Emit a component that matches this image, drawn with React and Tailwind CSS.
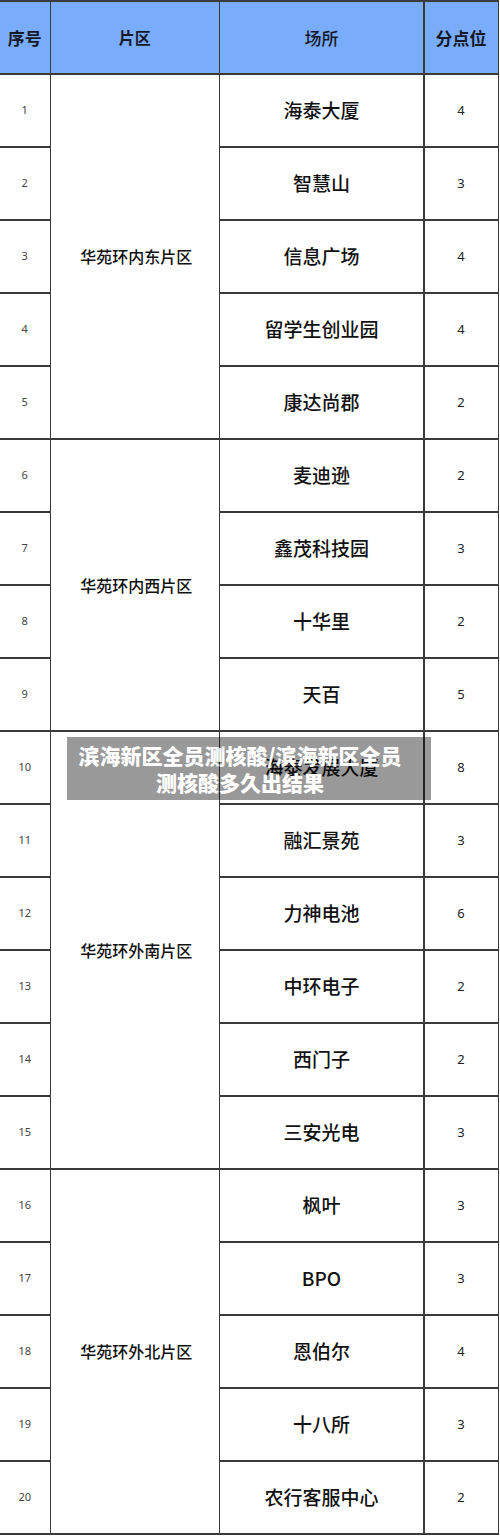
const groups = [
  {
    name: '华苑环内东片区',
    rows: [
      ['海泰大厦', 4],
      ['智慧山', 3],
      ['信息广场', 4],
      ['留学生创业园', 4],
      ['康达尚郡', 2],
    ],
  },
  {
    name: '华苑环内西片区',
    rows: [
      ['麦迪逊', 2],
      ['鑫茂科技园', 3],
      ['十华里', 2],
      ['天百', 5],
    ],
  },
  {
    name: '华苑环外南片区',
    rows: [
      ['海泰发展大厦', 8],
      ['融汇景苑', 3],
      ['力神电池', 6],
      ['中环电子', 2],
      ['西门子', 2],
      ['三安光电', 3],
    ],
  },
  {
    name: '华苑环外北片区',
    rows: [
      ['枫叶', 3],
      ['BPO', 3],
      ['恩伯尔', 4],
      ['十八所', 3],
      ['农行客服中心', 2],
    ],
  },
];

const spanClass = {
  4: 'row-span-4',
  5: 'row-span-5',
  6: 'row-span-6',
};

const cjk = "font-['Noto_Sans_CJK_SC','Noto_Sans',sans-serif]";

export default function App() {
  let n = 0;
  const cells = [];

  groups.forEach((g, gi) => {
    g.rows.forEach(([place, count], ri) => {
      n += 1;
      cells.push(
        <div key={'n' + n} className="bg-white flex items-center justify-center text-[11px] text-[#444] font-['Noto_Sans',sans-serif]">
          {n}
        </div>
      );
      if (ri === 0) {
        cells.push(
          <div
            key={'g' + gi}
            className={`${spanClass[g.rows.length]} bg-white flex items-center justify-center pl-[3px] text-[16px] font-medium text-[#111] ${cjk}`}
          >
            {g.name}
          </div>
        );
      }
      cells.push(
        <div key={'p' + n} className={`bg-white flex items-center justify-center text-[19px] font-medium text-[#111] ${cjk}`}>
          {place}
        </div>
      );
      cells.push(
        <div key={'c' + n} className="bg-white flex items-center justify-center text-[13px] text-[#222] font-['Noto_Sans',sans-serif]">
          {count}
        </div>
      );
    });
  });

  return (
    <div className="relative w-[500px] h-[1537px] bg-white overflow-hidden">
      <div className="w-[499px] grid grid-cols-[49.5px_167.5px_203px_73px] auto-rows-[71.5px] gap-[1.5px] pt-[1.5px] pb-[1.5px] pr-[1.5px] bg-[#3a3a3a]">
        {/* Header */}
        <div className={`bg-[#79adfc] flex items-center justify-center text-[17px] font-bold text-[#15182a] ${cjk}`}>序号</div>
        <div className={`bg-[#79adfc] flex items-center justify-center text-[16px] font-bold text-[#15182a] ${cjk}`}>片区</div>
        <div className={`bg-[#79adfc] flex items-center justify-center text-[17px] font-medium text-[#15182a] ${cjk}`}>场所</div>
        <div className={`bg-[#79adfc] flex items-center justify-center text-[17px] font-bold text-[#15182a] ${cjk}`}>分点位</div>
        {cells}
      </div>

      {/* Caption overlay */}
      <div className="absolute left-[67px] top-[737px] w-[364px] h-[63px] bg-black/40 flex items-center justify-center pr-[18px]">
        <p className={`text-center text-white text-[21px] leading-[27px] font-black ${cjk}`}>
          滨海新区全员测核酸/滨海新区全员
          <br />
          测核酸多久出结果
        </p>
      </div>
    </div>
  );
}
